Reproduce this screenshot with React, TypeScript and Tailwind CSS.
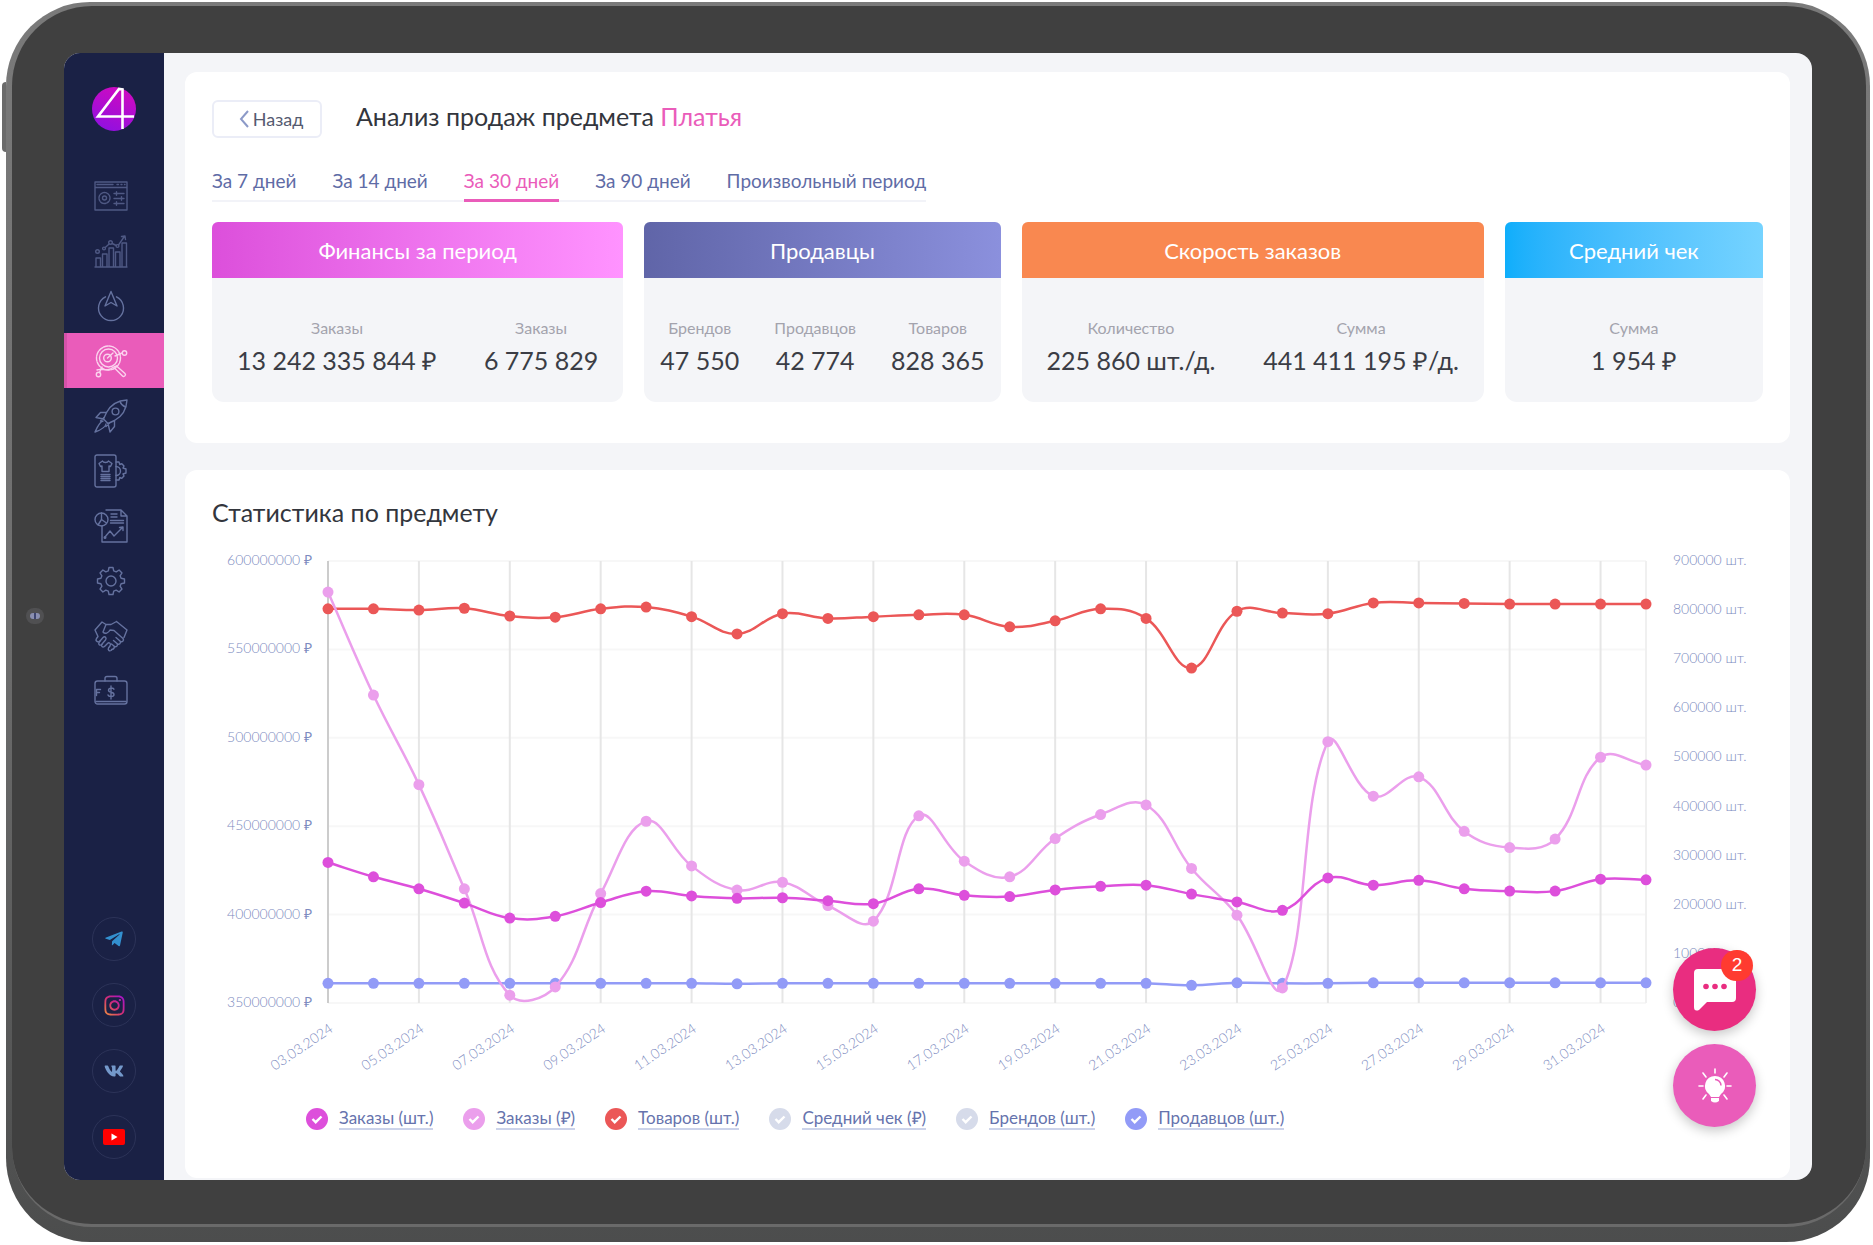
import React, { useState } from "react";
import { FaInstagram, FaTelegramPlane, FaVk } from "react-icons/fa";

interface IconProps {
  children: React.ReactNode;
}

const Icon: React.FC<IconProps> = ({ children }) => (
  <svg
    viewBox="0 0 34 34"
    className="h-[34px] w-[34px] shrink-0"
    fill="none"
    stroke="currentColor"
    strokeWidth="1.4"
    strokeLinecap="round"
    strokeLinejoin="round"
    aria-hidden="true"
  >
    {children}
  </svg>
);

const GEAR =
  "M15 3.500h4l.7 3.400 2.500 1 2.900-1.900 2.900 2.900-1.900 2.900 1 2.500 3.400.7v4l-3.400.7-1 2.500 1.900 2.900-2.900 2.900-2.900-1.900-2.500 1-.7 3.400h-4l-.7-3.400-2.500-1-2.900 1.900-2.900-2.900 1.900-2.900-1-2.500L3.500 19v-4l3.400-.7 1-2.500-1.900-2.900L8.900 6l2.900 1.900 2.500-1z";

const navItems = [
  {
    label: "Панель управления",
    icon: (
      <Icon>
        <path d="M1 3h32v28H1zM1 8.500h32M3 5.500h16M23 5.500h1.500M27 5.500h1M30.500 5.500h.5" />
        <circle cx="10.500" cy="19" r="5.500" strokeDasharray="2.400 1" />
        <circle cx="10.500" cy="19" r="2" />
        <path d="M20 14.500h10M20 19.500h10M20 24.500h10M22.500 12.800v3.400M27.500 17.800v3.400M22.500 22.800v3.400" />
      </Icon>
    ),
  },
  {
    label: "Статистика",
    icon: (
      <Icon>
        <path d="M1 33h32M2 33V24h4.500v9M8.500 33V20H13v13M15 33V14h4.500v19M21.500 33V18H26v15M28 33V9h4.500v24" />
        <circle cx="3.500" cy="17.500" r="1.800" />
        <circle cx="10" cy="14.500" r="1.400" />
        <circle cx="16.500" cy="8.500" r="1.800" />
        <circle cx="23.500" cy="12" r="1.400" />
        <path d="M11.200 13.400l3.900-3.500M18.200 9.500l4 2M24.600 10.800L30 3M27.500 2.500l3.500-.5.500 3.500" />
      </Icon>
    ),
  },
  {
    label: "Мониторинг",
    icon: (
      <Icon>
        <path d="M11.500 7.800A12.500 12.500 0 1 0 22.500 7.800" />
        <path d="M17 2.500l6 14.500-6-3.500-6 3.500z" />
      </Icon>
    ),
  },
  {
    label: "Анализ рынка",
    icon: (
      <Icon>
        <circle cx="14.500" cy="14" r="12" strokeDasharray="4.500 1.200" />
        <circle cx="14.500" cy="14" r="9" />
        <circle cx="13.500" cy="14" r="3.800" />
        <path d="M13.500 14l5.500-5M22.500 22l8.500 7.500c1.500 1.500-1 4-2.500 2.500L20.500 24M21 12l7-3" />
        <circle cx="30.500" cy="9" r="2.200" />
        <circle cx="4.500" cy="30.500" r="2.200" />
        <path d="M5.500 28.500L8 23M3 26c4-2 8 1 12-.5s5-3.500 8-3.500" />
      </Icon>
    ),
  },
  {
    label: "Продвижение",
    icon: (
      <Icon>
        <path d="M33 1C23 1.500 16 7 12.500 13.500L9.500 20l4.500 4.500 6.500-3C27 18 32.500 11 33 1z" />
        <circle cx="21.500" cy="12.500" r="3.400" />
        <path d="M26 2.500c1 3 3 4.500 5.500 5.500M12.500 13.500H6.500L2 18.500l7.500 1.500M20.500 21.500v6L16 33l-2-8.500M10 18.500L6.500 22M15.500 24L12 27.500M9 22c-3 .500-5.500 5.500-8 11 5.500-2 10.500-5 11-8" />
      </Icon>
    ),
  },
  {
    label: "Карточки товаров",
    icon: (
      <Icon>
        <rect x="1" y="1" width="21" height="32" rx="2" />
        <path d="M8.500 7L5 9.500l1.500 3L8 12v5.500h7V12l1.500.500 1.500-3L14.500 7c-1 2-5 2-6 0z" />
        <path d="M7 20.500h9M7 22.500h9M7 24.500h9M7 26.500h9" />
        <path d="M22 8h3l.800 2.500 2-.8 2.200 2.300-1 2 3 1v4l-3 1 1 2-2.200 2.300-2-.8L25 26h-3M22 12.500a4.500 4.500 0 0 1 0 9" />
      </Icon>
    ),
  },
  {
    label: "Отчёты",
    icon: (
      <Icon>
        <path d="M8 17v16h25V7l-6-6H12M27 1v6h6" />
        <circle cx="7.500" cy="10.500" r="6.500" />
        <path d="M7.500 4v6.500l5 3.500M7.500 10.500L4 16M17 5h6M17 8h6M16.500 11.500h13M16.500 14h13" />
        <path d="M11 28l5-6 4 5 8-8M25.500 18.500l3.500-.500v3.500" />
        <circle cx="11" cy="28.500" r=".8" />
      </Icon>
    ),
  },
  {
    label: "Настройки",
    icon: (
      <Icon>
        <path d={GEAR} />
        <circle cx="17" cy="17" r="5" />
      </Icon>
    ),
  },
  {
    label: "Партнёрам",
    icon: (
      <Icon>
        <path d="M1 11l7-8 4 2.500h5l5.500-3L33 11l-3 7.500M1 11l3 6.500M12 5.500L9 13c2 2.500 5.500 1 7-2l4 .5 9 8M22.500 2.500L17 5.500M4 17.500l-1.500 2c-1.500 2.500 1.500 4.500 3.500 2.500l3-3.500c2-2 4 .5 2.500 2.500l-3.500 4c-1.500 2 .5 4 2.500 2.500l3-3c1.500-1.500 4 0 2.500 2.500l-1.500 2c-1 2 1 3.500 2.500 2.500l3-2.500M29 19.500c1.500 2-1 4.500-3 2.500l-4-3.500M26 22c1.500 2-1 4.500-3 2.500l-3.500-3M23 24.500c1.500 2-1 4.500-3 2.500l-2.500-2M20 27c1 2-.5 3.500-2.500 3.500" />
        <path d="M6 22l-1 1.500c-1 2 1 3.500 3 2" />
      </Icon>
    ),
  },
  {
    label: "Финансы",
    icon: (
      <Icon>
        <rect x="1" y="7" width="32" height="23" rx="2.500" />
        <path d="M11 7V4.500A2 2 0 0 1 13 2.500h8a2 2 0 0 1 2 2V7M2 27.500h30M2.500 15.500h4M2.500 18.500h3M2.500 15.500v6" />
        <path d="M20 15.200c-.5-1.500-5.500-1.800-5.500 1s5.500 1.300 5.500 4.200-5.500 2.500-6 .6M17 12v13" />
      </Icon>
    ),
  },
];

const socials = [
  { label: "Telegram", icon: <FaTelegramPlane className="h-5 w-5 text-[#3390d0]" /> },
  {
    label: "Instagram",
    icon: (
      <>
        <svg width="0" height="0" className="absolute" aria-hidden="true">
          <linearGradient id="insta" x1="0" y1="1" x2="1" y2="0">
            <stop offset="0" stopColor="#f0903c" />
            <stop offset=".5" stopColor="#d02c78" />
            <stop offset="1" stopColor="#a010d8" />
          </linearGradient>
        </svg>
        <FaInstagram className="h-[23px] w-[23px]" fill="url(#insta)" />
      </>
    ),
  },
  { label: "ВКонтакте", icon: <FaVk className="h-5 w-5 text-[#7499cb]" /> },
  {
    label: "YouTube",
    icon: (
      <svg viewBox="0 0 22 16" className="h-4 w-[22px]" aria-hidden="true">
        <rect width="22" height="16" rx="2" fill="#ff0000" />
        <path d="M8.500 4.500v7l6-3.500z" fill="#fff" />
      </svg>
    ),
  },
];

const periods = ["За 7 дней", "За 14 дней", "За 30 дней", "За 90 дней", "Произвольный период"];

const summary = [
  {
    title: "Финансы за период",
    header: "bg-linear-to-r from-[#dc4fdb] to-[#ff93ff]",
    body: "px-[25px]",
    items: [
      { label: "Заказы", value: "13 242 335 844 ₽" },
      { label: "Заказы", value: "6 775 829" },
    ],
  },
  {
    title: "Продавцы",
    header: "bg-linear-to-r from-[#6065a8] to-[#8b90dd]",
    body: "px-4",
    items: [
      { label: "Брендов", value: "47 550" },
      { label: "Продавцов", value: "42 774" },
      { label: "Товаров", value: "828 365" },
    ],
  },
  {
    title: "Скорость заказов",
    header: "bg-[#f98850]",
    body: "px-[25px]",
    items: [
      { label: "Количество", value: "225 860 шт./д." },
      { label: "Сумма", value: "441 411 195 ₽/д." },
    ],
  },
  {
    title: "Средний чек",
    header: "bg-linear-to-r from-[#0eaefb] to-[#75d3ff]",
    body: "px-4",
    items: [{ label: "Сумма", value: "1 954 ₽" }],
  },
];

// orders in thousands of pieces, money in millions of roubles
const ordersCount = [
  286.2, 257, 232.6, 203.4, 172.9, 176.6, 204.6, 227.7, 218, 213.1, 214.3, 208.3, 202.2, 232.6, 219.2,
  216.8, 230.2, 237.5, 239.9, 221.7, 205.8, 188.8, 254.6, 239.9, 249.7, 232.6, 227.8, 227.8, 252.1, 250.9,
];
const ordersMoney = [
  582.4, 524.2, 473.5, 414.6, 354.4, 359.1, 411.9, 452.8, 427.5, 413.9, 418.3, 405.1, 396.3, 455.9, 430.2,
  421.4, 443, 456.6, 462, 426.1, 399.7, 358.5, 497.8, 467, 477.9, 447.1, 437.9, 442.7, 489, 484.6,
];
const goods = [
  802.6, 802.6, 800, 803.8, 788, 785.5, 802.6, 806.2, 786.7, 751.4, 792.8, 783.1, 786.7, 790.4, 790.4,
  766, 778.2, 802.6, 783.1, 682, 797.7, 794, 792.8, 814.7, 814.7, 813.5, 812.3, 812.3, 812.3, 812.3,
];
const sellers = [
  40, 40, 40, 40, 40, 40, 40, 40, 40, 39, 40, 40, 40, 40, 40,
  40, 40, 40, 40, 36, 41, 40, 40, 41, 41, 41, 41, 41, 41, 41,
];

const PLOT = { left: 116, right: 1434, top: 21, bottom: 463 };
const COUNT = ordersCount.length;

const xAt = (i: number) => PLOT.left + ((PLOT.right - PLOT.left) * i) / (COUNT - 1);
const yAt = (v: number, min: number, max: number) =>
  PLOT.bottom - ((v - min) / (max - min)) * (PLOT.bottom - PLOT.top);

type Point = { x: number; y: number };

const smoothPath = (pts: Point[], tension = 0.4) => {
  const controls = pts.map((p, i) => {
    const prev = pts[i - 1] ?? p;
    const next = pts[i + 1] ?? p;
    const d1 = Math.hypot(p.x - prev.x, p.y - prev.y);
    const d2 = Math.hypot(next.x - p.x, next.y - p.y);
    const a = (tension * d1) / (d1 + d2);
    const b = (tension * d2) / (d1 + d2);
    return {
      before: { x: p.x - a * (next.x - prev.x), y: p.y - a * (next.y - prev.y) },
      after: { x: p.x + b * (next.x - prev.x), y: p.y + b * (next.y - prev.y) },
    };
  });
  return pts
    .map((p, i) => {
      if (i === 0) return `M${p.x} ${p.y}`;
      const c1 = controls[i - 1].after;
      const c2 = controls[i].before;
      return `C${c1.x} ${c1.y} ${c2.x} ${c2.y} ${p.x} ${p.y}`;
    })
    .join("");
};

const series = [
  { id: "orders", label: "Заказы (шт.)", color: "#dd4fdb", data: ordersCount, min: 0, max: 900, on: true },
  { id: "money", label: "Заказы (₽)", color: "#eb9fec", data: ordersMoney, min: 350, max: 600, on: true },
  { id: "goods", label: "Товаров (шт.)", color: "#eb5757", data: goods, min: 0, max: 900, on: true },
  { id: "check", label: "Средний чек (₽)", color: "#d6dbea", data: [], min: 0, max: 900, on: false },
  { id: "brands", label: "Брендов (шт.)", color: "#d6dbea", data: [], min: 0, max: 900, on: false },
  { id: "sellers", label: "Продавцов (шт.)", color: "#929bf7", data: sellers, min: 0, max: 900, on: true },
];

// bottom to top
const drawOrder = ["goods", "sellers", "money", "orders"];

const Chart: React.FC<{ visible: string[] }> = ({ visible }) => {
  const leftTicks = [600, 550, 500, 450, 400, 350];
  const rightTicks = [900, 800, 700, 600, 500, 400, 300, 200, 100, 0];
  const dates = Array.from({ length: 15 }, (_, i) => `${String(3 + i * 2).padStart(2, "0")}.03.2024`);

  return (
    <svg
      viewBox="0 0 1551 540"
      className="block w-full font-['Lato',sans-serif]"
      role="img"
      aria-label="Статистика по предмету"
    >
      {leftTicks.map((t) => (
        <line
          key={t}
          x1={PLOT.left}
          x2={PLOT.right}
          y1={yAt(t, 350, 600)}
          y2={yAt(t, 350, 600)}
          stroke="#f7f7f7"
          strokeWidth="2"
        />
      ))}
      {dates.map((d, i) => (
        <line
          key={d}
          x1={xAt(i * 2)}
          x2={xAt(i * 2)}
          y1={PLOT.top}
          y2={PLOT.bottom}
          stroke={i === 0 ? "#cccccc" : "#e6e6e6"}
          strokeWidth="2"
        />
      ))}
      <line x1={PLOT.right} x2={PLOT.right} y1={PLOT.top} y2={PLOT.bottom} stroke="#f0f0f0" strokeWidth="2" />

      <g fill="#7d8bc0" fontSize="14" fontWeight="300">
        {leftTicks.map((t) => (
          <text key={t} x={100} y={yAt(t, 350, 600) + 4} textAnchor="end">
            {t}000000 ₽
          </text>
        ))}
        {rightTicks.map((t) => (
          <text key={t} x={1461} y={yAt(t, 0, 900) + 4}>
            {t === 0 ? "0 шт." : `${t}000 шт.`}
          </text>
        ))}
        {dates.map((d, i) => (
          <text
            key={d}
            textAnchor="end"
            transform={`translate(${xAt(i * 2) + 6} ${PLOT.bottom + 28}) rotate(-34)`}
          >
            {d}
          </text>
        ))}
      </g>

      {drawOrder.map((id) => {
        const s = series.find((item) => item.id === id);
        if (!s || !visible.includes(id)) return null;
        const pts = s.data.map((v, i) => ({ x: xAt(i), y: yAt(v, s.min, s.max) }));
        return (
          <g key={id}>
            <path d={smoothPath(pts)} fill="none" stroke={s.color} strokeWidth="2.500" />
            {pts.map((p) => (
              <circle key={p.x} cx={p.x} cy={p.y} r="5.500" fill={s.color} />
            ))}
          </g>
        );
      })}
    </svg>
  );
};

const Sidebar: React.FC = () => (
  <aside className="flex w-[100px] shrink-0 flex-col bg-[#1a2145]">
    <a href="#" aria-label="Главная" className="mt-[34px] self-center">
      <svg viewBox="0 0 44 44" className="h-11 w-11" aria-hidden="true">
        <defs>
          <linearGradient id="logo" x1=".7" y1="0" x2=".3" y2="1">
            <stop offset="0" stopColor="#d00ac0" />
            <stop offset="1" stopColor="#9010e0" />
          </linearGradient>
        </defs>
        <circle cx="22" cy="22" r="22" fill="url(#logo)" />
        <path d="M30.500 42V2.500L27 2 6 29.500h36" fill="none" stroke="#fff" strokeWidth="2.600" />
      </svg>
    </a>
    <nav className="mt-[37px] flex flex-col">
      {navItems.map((item, i) => (
        <a
          key={item.label}
          href="#"
          aria-label={item.label}
          className={`flex h-[55px] items-center border-l-[3px] pl-[27px] ${
            i === 3
              ? "border-[#d552a9] bg-[#ea5cba] text-[#fbd3ee]"
              : i < 2
                ? "border-transparent text-[#4f5984]"
                : "border-transparent text-[#65729f]"
          }`}
        >
          {item.icon}
        </a>
      ))}
    </nav>
    <div className="mt-auto mb-[21px] flex flex-col items-center gap-[22px]">
      {socials.map((s) => (
        <a
          key={s.label}
          href="#"
          aria-label={s.label}
          className="flex h-11 w-11 items-center justify-center rounded-full border border-[#2c3358]"
        >
          {s.icon}
        </a>
      ))}
    </div>
  </aside>
);

const Header: React.FC = () => {
  const [period, setPeriod] = useState("За 30 дней");

  return (
    <section className="rounded-xl bg-white px-[27px] pt-7 pb-[41px]">
      <div className="flex items-start gap-[34px]">
        <button
          type="button"
          className="flex h-[38px] w-[110px] items-center justify-center gap-1 rounded-md border-2 border-[#ebedf7] pl-2 text-lg text-[#555a70]"
        >
          <svg viewBox="0 0 10 18" className="h-[18px] w-[10px]" aria-hidden="true">
            <path d="M9 1L2 9l7 8" fill="none" stroke="#8c9ac8" strokeWidth="2" />
          </svg>
          Назад
        </button>
        <h1 className="text-[25px] leading-8 text-[#33363d]">
          Анализ продаж предмета <span className="text-[#ea5cba]">Платья</span>
        </h1>
      </div>
      <div className="mt-7 flex w-fit gap-9 border-b-2 border-[#f2f3f8]">
        {periods.map((p) => (
          <button
            key={p}
            type="button"
            onClick={() => setPeriod(p)}
            className={`-mb-[2px] h-9 border-b-[3px] pb-1 text-[19px] leading-7 ${
              p === period ? "border-[#ea5cba] text-[#ea5cba]" : "border-transparent text-[#5f6ca6]"
            }`}
          >
            {p}
          </button>
        ))}
      </div>
      <div className="mt-5 grid grid-cols-[411fr_356fr_462fr_258fr] gap-[21px]">
        {summary.map((card) => (
          <div key={card.title} className="overflow-hidden rounded-t-md rounded-b-xl bg-[#f4f5f8]">
            <h2 className={`flex h-14 items-center justify-center text-[22px] text-white ${card.header}`}>
              {card.title}
            </h2>
            <dl
              className={`flex h-[124px] items-center pt-3 ${card.body} ${
                card.items.length > 1 ? "justify-between" : "justify-center"
              }`}
            >
              {card.items.map((item) => (
                <div key={item.value} className="text-center whitespace-nowrap">
                  <dt className="text-base leading-7 text-[#a3a3ad]">{item.label}</dt>
                  <dd className="text-[25px] leading-9 text-[#3b3d45]">{item.value}</dd>
                </div>
              ))}
            </dl>
          </div>
        ))}
      </div>
    </section>
  );
};

const Statistics: React.FC = () => {
  const [visible, setVisible] = useState(series.filter((s) => s.on).map((s) => s.id));

  const toggle = (id: string) => {
    setVisible((prev) => (prev.includes(id) ? prev.filter((v) => v !== id) : [...prev, id]));
  };

  return (
    <section className="rounded-xl bg-white px-[27px] pt-[26px] pb-12">
      <h2 className="text-[25px] leading-8 text-[#33363d]">Статистика по предмету</h2>
      <div className="mt-3">
        <Chart visible={visible} />
      </div>
      <div className="mt-7 flex gap-[30px] pl-[94px]">
        {series.map((s) => (
          <label
            key={s.id}
            className="flex cursor-pointer items-center gap-[11px] text-[17px] leading-5 whitespace-nowrap text-[#6673ad]"
          >
            <span className="relative h-[22px] w-[22px]">
              <input
                type="checkbox"
                checked={visible.includes(s.id)}
                onChange={() => toggle(s.id)}
                className="block h-[22px] w-[22px] appearance-none rounded-full"
                style={{ backgroundColor: visible.includes(s.id) ? s.color : "#d6dbea" }}
              />
              <svg viewBox="0 0 22 22" className="pointer-events-none absolute inset-0" aria-hidden="true">
                <path d="M6.500 11l3.200 3.200 5.800-5.700" fill="none" stroke="#fff" strokeWidth="2.400" />
              </svg>
            </span>
            <span className="border-b-2 border-[#ccd3ea]">{s.label}</span>
          </label>
        ))}
      </div>
    </section>
  );
};

const ChatButtons: React.FC = () => (
  <div className="absolute right-14 bottom-[53px] flex flex-col gap-[13px]">
    <button
      type="button"
      aria-label="Чат"
      className="relative flex h-[83px] w-[83px] items-center justify-center rounded-full bg-[#e92d80] shadow-[0_4px_12px_rgba(0,0,0,0.22)]"
    >
      <svg viewBox="0 0 42 42" className="h-[42px] w-[42px]" aria-hidden="true">
        <path
          d="M4 0h34q4 0 4 4v25q0 4-4 4H13l-8 8q-5 2-5-3V4q0-4 4-4z"
          fill="#fff"
        />
        <g fill="#e92d80">
          <circle cx="12" cy="17.500" r="2.800" />
          <circle cx="21" cy="17.500" r="2.800" />
          <circle cx="30" cy="17.500" r="2.800" />
        </g>
      </svg>
      <span className="absolute top-[2px] right-[3px] flex h-[31px] w-8 items-center justify-center rounded-full bg-[#ff3b30] font-['Liberation_Sans',sans-serif] text-[19px] text-white">
        2
      </span>
    </button>
    <button
      type="button"
      aria-label="Идеи"
      className="flex h-[83px] w-[83px] items-center justify-center rounded-full bg-[#ea5cba] shadow-[0_4px_12px_rgba(0,0,0,0.22)]"
    >
      <svg viewBox="0 0 34 36" className="h-9 w-[34px]" aria-hidden="true">
        <path d="M17 8a10 10 0 0 0-6 18l2 3h8l2-3A10 10 0 0 0 17 8z" fill="#fff" />
        <path d="M13 30h8v3q-4 3-8 0z" fill="#fff" />
        <path d="M17 11.500a6 6 0 0 1 6 6" fill="none" stroke="#ea5cba" strokeWidth="1.500" />
        <path
          d="M17 1v4M5 5l3 4M29 5l-3 4M1 18h4M29 18h4M5 31l3-4M29 31l-3-4"
          stroke="#fff"
          strokeWidth="1.600"
          strokeLinecap="round"
        />
      </svg>
    </button>
  </div>
);

const App: React.FC = () => {
  return (
    <div className="min-h-screen bg-white pt-[2px] pr-[3px] pb-[2px] pl-[6px] font-['Lato',sans-serif]">
      {/* tablet body */}
      <div className="relative rounded-[84px] bg-linear-to-b from-[#7a7a7a] via-[#6e6e6e] to-[#4c4d4d] pt-1 pr-1 pb-[15px] pl-[6px]">
        <div className="absolute top-20 -left-1 h-[70px] w-1 rounded-l-sm bg-[#6b6b6b]" />
        <div className="absolute top-[606px] left-5 flex h-4 w-[18px] items-center justify-center rounded-full bg-[#505052]">
          <span className="h-[6px] w-[10px] rounded-full border-x-4 border-[#8a8fb0] bg-[#3d4470]" />
        </div>
        <div className="rounded-[80px] border-b-[3px] border-[#6a6a6a] bg-[#404040] pt-[47px] pr-[54px] pb-11 pl-[52px]">
          <div className="relative flex overflow-hidden rounded-[16px] bg-[#f4f5f8]">
            <Sidebar />
            <main className="flex min-w-0 flex-1 flex-col gap-[27px] pt-[19px] pr-[22px] pb-[2px] pl-[21px]">
              <Header />
              <Statistics />
            </main>
            <ChatButtons />
          </div>
        </div>
      </div>
    </div>
  );
};

export default App;
